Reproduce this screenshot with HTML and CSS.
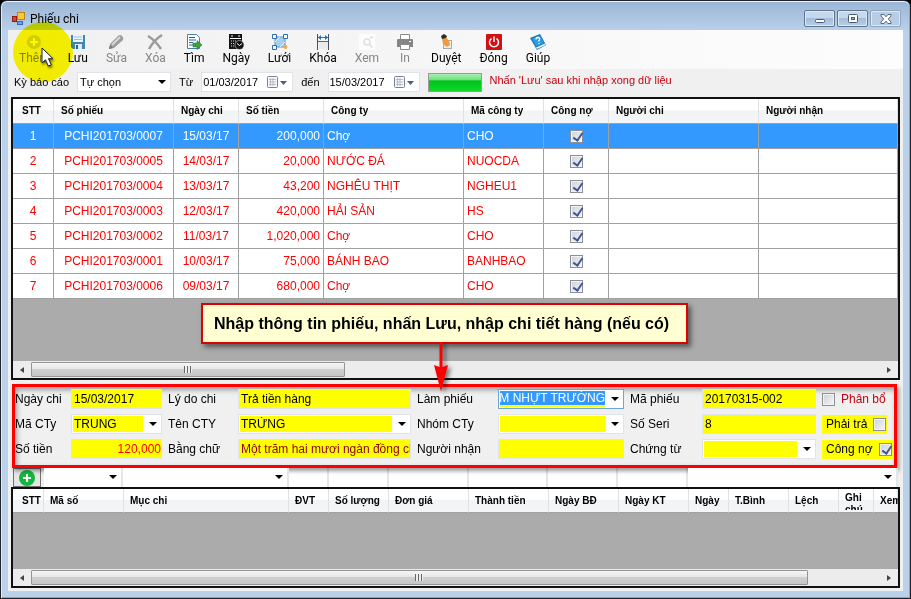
FILE: index.html
```html
<!DOCTYPE html>
<html lang="vi">
    <head>
        <meta charset="UTF-8">
        <title>Phiếu chi</title>
        <link rel="stylesheet" href="styles.css">
    </head>
    <body>
        <div class="window">
            <header class="titlebar">
                <svg class="app-icon" width="14" height="14" viewBox="0 0 14 14">
                    <rect x="0.5" y="4.5" width="4" height="5" fill="#d8442c" stroke="#8e1c10"/>
                    <rect x="5.5" y="0.5" width="7" height="7" fill="#fbc63c" stroke="#b9871a"/>
                    <rect x="5.5" y="9.5" width="5" height="3" fill="#6ba3ee" stroke="#3568b8"/>
                </svg>
                <h1 class="title">Phiếu chi</h1>
                <div class="window-buttons">
                    <button class="win-btn" aria-label="Minimize">
                        <svg width="12" height="10" viewBox="0 0 12 10"><rect x="1.5" y="5.5" width="9" height="3" rx="1" fill="#fff" stroke="#4b5a72"/></svg>
                    </button>
                    <button class="win-btn" aria-label="Maximize">
                        <svg width="12" height="10" viewBox="0 0 12 10"><rect x="1.5" y="0.5" width="9" height="8" rx="1" fill="#fff" stroke="#4b5a72"/><rect x="4.5" y="3.5" width="3" height="2" fill="#9db6d3" stroke="#4b5a72"/></svg>
                    </button>
                    <button class="win-btn win-close" aria-label="Close">
                        <svg width="12" height="10" viewBox="0 0 12 10"><path d="M1 .5h3l2 2.3 2-2.3h3v1.500L8.300 5 11 8v1.500H8L6 7.200 4 9.500H1V8l2.700-3L1 2z" fill="#fff" stroke="#5c6675"/></svg>
                    </button>
                </div>
            </header>

            <main class="client">
                <nav class="toolbar">
                    <button class="tool disabled">
                        <svg width="16" height="16" viewBox="0 0 16 16"><circle cx="8" cy="8" r="7" fill="#d2d2d2"/><path d="M8 4v8M4 8h8" stroke="#fff" stroke-width="2"/></svg>
                        Thêm
                    </button>
                    <button class="tool">
                        <svg width="16" height="16" viewBox="0 0 16 16"><path d="M1 1h14v14H3l-2-2z" fill="#3f86b4"/><path d="M3 1h10v7H3z" fill="#e9f6fb"/><path d="M4 3h8M4 5.500h8" stroke="#8fc3da"/><path d="M5 10h7v5H5z" fill="#d8edf5"/><path d="M6 11h2v4H6z" fill="#2b668f"/></svg>
                        Lưu
                    </button>
                    <button class="tool disabled">
                        <svg width="16" height="16" viewBox="0 0 16 16"><path d="M1 15l1-5 8-8q2-2 4 0t1 4l-9 8z" fill="#9c9c9c"/><path d="M4 11l8-8" stroke="#d9d9d9" stroke-width="2"/><path d="M1 15l1-4 3 3z" fill="#777"/></svg>
                        Sửa
                    </button>
                    <button class="tool disabled">
                        <svg width="16" height="16" viewBox="0 0 16 16"><path d="M1 2q7 4 13 13M15 1Q7 6 2 15" fill="none" stroke="#9b9b9b" stroke-width="2.500"/></svg>
                        Xóa
                    </button>
                    <button class="tool">
                        <svg width="16" height="16" viewBox="0 0 16 16"><path d="M1.500 .5h9l3 3v11h-12z" fill="#fff" stroke="#4a7fa8"/><path d="M3 3.500h6M3 6h7M3 8.500h4M3 11h4" stroke="#246aa1"/><path d="M7 9h4V6.500l5 4.500-5 4.500V13H7z" fill="#3fa142" stroke="#216b25" stroke-width=".5"/></svg>
                        Tìm
                    </button>
                    <button class="tool">
                        <svg width="16" height="16" viewBox="0 0 16 16"><path d="M1 0h13v15H1z" fill="#151515"/><path d="M4 1v2M11 1v2" stroke="#fff"/><path d="M2 4.500h11" stroke="#fff"/><path d="M3 7h5M3 9.500h4M3 12h4" stroke="#ddd" stroke-dasharray="1 1"/><circle cx="11.500" cy="11" r="4.500" fill="#111" stroke="#fff" stroke-width=".5"/><path d="M9 9.500l2.500 2 2.500-2" fill="none" stroke="#fff"/></svg>
                        Ngày
                    </button>
                    <button class="tool">
                        <svg width="16" height="16" viewBox="0 0 16 16"><path d="M3 3h10v10H3z" fill="#a5cff2" stroke="#5b95c9"/><path d="M3 8l5-5M8 13l5-5" stroke="#e4f2fc"/><path d="M.5.500h4v4h-4zM11.500.500h4v4h-4zM.5 11.500h4v4h-4z" fill="#f3faff" stroke="#2d6da8"/><circle cx="13.500" cy="13" r="2" fill="#f2a94e"/></svg>
                        Lưới
                    </button>
                    <button class="tool">
                        <svg width="16" height="16" viewBox="0 0 16 16"><path d="M2.500 0v16M13.500 0v16" stroke="#46505e"/><path d="M3 3.500h10" stroke="#2874ad"/><path d="M3 3.500L6 1v5zM13 3.500L10 1v5z" fill="#2874ad"/><path d="M3 7.500h10" stroke="#606975"/><path d="M4 8h9v7H4z" fill="#e8eaec"/></svg>
                        Khóa
                    </button>
                    <button class="tool disabled">
                        <svg width="16" height="16" viewBox="0 0 16 16"><rect width="16" height="16" fill="#fcfcfc"/><circle cx="8" cy="8" r="3" fill="none" stroke="#e0e0e0" stroke-width="1.500"/><path d="M10.500 10.500l3 3M11 4l3-1" stroke="#e4e4e4" stroke-width="2"/></svg>
                        Xem
                    </button>
                    <button class="tool disabled">
                        <svg width="16" height="16" viewBox="0 0 16 16"><path d="M3.500 .5h9v5h-9z" fill="#fff" stroke="#8a8a8a"/><path d="M0 6q0-1 1-1h14q1 0 1 1v7H0z" fill="#858585"/><path d="M3.500 10.500h9v5h-9z" fill="#fff" stroke="#8a8a8a"/><path d="M12 7.500h2" stroke="#fff"/></svg>
                        In
                    </button>
                    <button class="tool">
                        <svg width="16" height="16" viewBox="0 0 16 16"><rect x="5.500" y="6.500" width="8" height="8" fill="#eee" stroke="#aaa"/><path d="M4 4l4-1 3 4 1 4-3 2-4-3z" fill="#f29a3e"/><path d="M3 2l3-2 3 2-1 2-4 1z" fill="#2b2b2b"/></svg>
                        Duyệt
                    </button>
                    <button class="tool">
                        <svg width="16" height="16" viewBox="0 0 16 16"><rect width="16" height="16" rx="1" fill="#d30f13"/><path d="M5.500 4.500a4.500 4.500 0 1 0 5 0" fill="none" stroke="#fff" stroke-width="1.500"/><path d="M8 2.500v5.500" stroke="#fff" stroke-width="1.500"/></svg>
                        Đóng
                    </button>
                    <button class="tool">
                        <svg width="16" height="16" viewBox="0 0 16 16"><path d="M0 4L10 0l6 11-9 5z" fill="#1b74b8"/><path d="M6 13.500l9-4 .5 1.500-8.500 4z" fill="#e8f3fa"/><path d="M2 4.500L9.500 1.500l4.500 7.500-8 3.500z" fill="#2f9be0"/><path d="M6 5.500q0-2 2-2t1.500 2L8.500 7.500M9 9v1" fill="none" stroke="#fff" stroke-width="1.300"/></svg>
                        Giúp
                    </button>
                </nav>

                <div class="filter">
                    <label for="period">Kỳ báo cáo</label>
                    <span class="combo period">
                        <select id="period"><option>Tự chọn</option></select>
                    </span>
                    <label for="from">Từ</label>
                    <span class="date">
                        <input id="from" type="text" value="01/03/2017">
                        <svg width="20" height="13" viewBox="0 0 20 13"><rect x=".5" y=".5" width="10" height="11" rx="1" fill="#f5f7fa" stroke="#7b8390"/><path d="M2 3.500h7M2 6h7M2 8.500h7M3.500 2v8M6 2v8" stroke="#a2aab8" stroke-width=".7"/><path d="M13 5h7l-3.500 4z" fill="#4a5f8c"/></svg>
                    </span>
                    <label for="to">đến</label>
                    <span class="date">
                        <input id="to" type="text" value="15/03/2017">
                        <svg width="20" height="13" viewBox="0 0 20 13"><rect x=".5" y=".5" width="10" height="11" rx="1" fill="#f5f7fa" stroke="#7b8390"/><path d="M2 3.500h7M2 6h7M2 8.500h7M3.500 2v8M6 2v8" stroke="#a2aab8" stroke-width=".7"/><path d="M13 5h7l-3.500 4z" fill="#4a5f8c"/></svg>
                    </span>
                    <progress class="progress" value="100" max="100" aria-label="Tiến độ"></progress>
                    <span class="hint">Nhấn 'Lưu' sau khi nhập xong dữ liệu</span>
                </div>

                <section class="grid vouchers">
                    <table>
                        <colgroup>
                            <col class="w41"><col class="w120"><col class="w65"><col class="w85"><col class="w140"><col class="w80"><col class="w65"><col class="w150"><col>
                        </colgroup>
                        <thead>
                            <tr><th class="stt">STT</th><th>Số phiếu</th><th>Ngày chi</th><th>Số tiền</th><th>Công ty</th><th>Mã công ty</th><th>Công nợ</th><th>Người chi</th><th>Người nhận</th></tr>
                        </thead>
                        <tbody id="rows"></tbody>
                    </table>
                    <div class="scrollbar">
                        <button class="scroll-arrow left" aria-label="Cuộn trái"></button>
                        <div class="track"><div class="thumb short"><i></i></div></div>
                        <button class="scroll-arrow right" aria-label="Cuộn phải"></button>
                    </div>
                </section>

                <form class="detail">
                    <label for="ngaychi">Ngày chi</label>
                    <input class="field" id="ngaychi" type="text" value="15/03/2017">
                    <label for="lydo">Lý do chi</label>
                    <input class="field" id="lydo" type="text" value="Trả tiền hàng">
                    <label for="lamphieu">Làm phiếu</label>
                    <span class="combo yellow focused"><input id="lamphieu" type="text" dir="rtl" value="LÂM NHỰT TRƯỜNG"></span>
                    <label for="maphieu">Mã phiếu</label>
                    <input class="field" id="maphieu" type="text" value="20170315-002">
                    <label class="check red"><input type="checkbox">Phân bổ</label>

                    <label for="macty">Mã CTy</label>
                    <span class="combo yellow"><input id="macty" type="text" value="TRUNG"></span>
                    <label for="tencty">Tên CTY</label>
                    <span class="combo yellow"><input id="tencty" type="text" value="TRỨNG"></span>
                    <label for="nhomcty">Nhóm CTy</label>
                    <span class="combo yellow"><input id="nhomcty" type="text"></span>
                    <label for="seri">Số Seri</label>
                    <input class="field" id="seri" type="text" value="8">
                    <label class="check marked">Phải trả<input type="checkbox"></label>

                    <label for="sotien">Số tiền</label>
                    <input class="field amount" id="sotien" type="text" value="120,000">
                    <label for="bangchu">Bằng chữ</label>
                    <input class="field words" id="bangchu" type="text" value="Một trăm hai mươi ngàn đồng chẵn">
                    <label for="nguoinhan">Người nhận</label>
                    <input class="field" id="nguoinhan" type="text">
                    <label for="chungtu">Chứng từ</label>
                    <span class="combo yellow"><input id="chungtu" type="text"></span>
                    <label class="check marked">Công nợ<input type="checkbox" checked></label>
                </form>

                <div class="entry">
                    <button class="add" aria-label="Thêm dòng">
                        <svg width="16" height="16" viewBox="0 0 16 16"><circle cx="8" cy="8" r="8" fill="#12b83c"/><path d="M8 4v8M4 8h8" stroke="#fff" stroke-width="2"/></svg>
                    </button>
                    <span class="combo"><select aria-label="Mã số"></select></span>
                    <span class="combo"><select aria-label="Mục chi"></select></span>
                    <input type="text" aria-label="ĐVT">
                    <input type="text" aria-label="Số lượng">
                    <input type="text" aria-label="Đơn giá">
                    <input type="text" aria-label="Thành tiền">
                    <input type="text" aria-label="Ngày BĐ">
                    <input type="text" aria-label="Ngày KT">
                    <span class="combo"><select aria-label="Ghi chú"></select></span>
                </div>

                <section class="grid items">
                    <table>
                        <colgroup>
                            <col class="w31"><col class="w80"><col class="w165"><col class="w40"><col class="w60"><col class="w80"><col class="w80"><col class="w70"><col class="w70"><col class="w40"><col class="w60"><col class="w50"><col class="w35"><col>
                        </colgroup>
                        <thead>
                            <tr><th class="stt">STT</th><th>Mã số</th><th>Mục chi</th><th>ĐVT</th><th>Số lượng</th><th>Đơn giá</th><th>Thành tiền</th><th>Ngày BĐ</th><th>Ngày KT</th><th>Ngày</th><th>T.Bình</th><th>Lệch</th><th><div class="wrap">Ghi chú</div></th><th>Xem</th></tr>
                        </thead>
                    </table>
                    <div class="scrollbar">
                        <button class="scroll-arrow left" aria-label="Cuộn trái"></button>
                        <div class="track"><div class="thumb long"><i></i></div></div>
                        <button class="scroll-arrow right" aria-label="Cuộn phải"></button>
                    </div>
                </section>
            </main>

            <div class="spot"></div>
            <svg class="pointer" width="14" height="21" viewBox="0 0 14 21"><path d="M1 1v15l3.500-3.200 2.800 6.200 3-1.300-2.800-6H12z" fill="#fff" stroke="#222"/></svg>

            <div class="callout">
                Nhập thông tin phiếu, nhấn Lưu, nhập chi tiết hàng (nếu có)
                <svg class="arrow" width="16" height="50" viewBox="0 0 16 50"><path d="M6.500 0h3v25l5.500-2L8 49.500 1 23l5.500 2z" fill="#f00"/></svg>
            </div>
        </div>

        <script>
        const vouchers = [
            ["PCHI201703/0007", "15/03/17", "200,000", "Chợ", "CHO"],
            ["PCHI201703/0005", "14/03/17", "20,000", "NƯỚC ĐÁ", "NUOCDA"],
            ["PCHI201703/0004", "13/03/17", "43,200", "NGHÊU THỊT", "NGHEU1"],
            ["PCHI201703/0003", "12/03/17", "420,000", "HẢI SẢN", "HS"],
            ["PCHI201703/0002", "11/03/17", "1,020,000", "Chợ", "CHO"],
            ["PCHI201703/0001", "10/03/17", "75,000", "BÁNH BAO", "BANHBAO"],
            ["PCHI201703/0006", "09/03/17", "680,000", "Chợ", "CHO"]
        ];

        document.getElementById('rows').innerHTML = vouchers.map((v, i) => `
            <tr class="${i === 0 ? 'selected' : ''}">
                <td class="center">${i + 1}</td>
                <td class="center">${v[0]}</td>
                <td class="center">${v[1]}</td>
                <td class="right">${v[2]}</td>
                <td>${v[3]}</td>
                <td>${v[4]}</td>
                <td class="center"><input type="checkbox" checked aria-label="Công nợ ${v[0]}"></td>
                <td></td>
                <td></td>
            </tr>`).join('');
        </script>
    </body>
</html>
```

FILE: styles.css
```css
* {
    box-sizing: border-box;
}

body {
    margin: 0;
    background: #000;
    font-family: "Liberation Sans", Arial, sans-serif;
    font-size: 12px;
    color: #000;
}

button, input, select {
    font: inherit;
    color: inherit;
    margin: 0;
    padding: 0;
    border: none;
    border-radius: 0;
    background: none;
    min-width: 0;
    outline: none;
}

.window {
    position: relative;
    display: flex;
    flex-direction: column;
    min-height: 100vh;
    padding: 0 7px 7px;
    border: 1px solid #20242c;
    border-radius: 7px 7px 0 0;
    background: linear-gradient(#9ab5d5, #bad1ea 30px);
    box-shadow: inset 0 1px #eef4fb, inset 1px 0 #dfeaf6, inset -1px -1px #3cc4e0;
}

/* title bar */
.titlebar {
    display: flex;
    align-items: center;
    height: 29px;
    padding: 6px 0 0 4px;
}

.title {
    margin: 0 0 0 4px;
    font: 12px Roboto, "Noto Sans", sans-serif;
}

.window-buttons {
    display: flex;
    gap: 2px;
    margin-left: auto;
    padding-right: 2px;
}

.win-btn {
    display: flex;
    align-items: center;
    justify-content: center;
    width: 31px;
    height: 17px;
    border: 1px solid #5f7590;
    border-radius: 2px;
    background: linear-gradient(#c6d8ec 50%, #a3bcd9 50%, #bad0e8);
    box-shadow: inset 0 0 0 1px #dbe8f5;
}

.win-close {
    border-color: #8ea5c0;
    background: #b7cde6;
}

/* client area */
.client {
    display: flex;
    flex: 1;
    flex-direction: column;
    background: #f0f0f0;
    padding-bottom: 3px;
}

.toolbar {
    display: flex;
    gap: 18px;
    height: 39px;
    padding: 4px 11px 0;
    background: linear-gradient(90deg, #f0f0f0, #fdfdfd);
}

.tool {
    display: flex;
    flex-direction: column;
    align-items: center;
    font: 12px/16px Roboto, "Noto Sans", sans-serif;
}

.disabled {
    color: #868686;
}

.filter {
    display: flex;
    align-items: center;
    height: 28px;
    padding: 0 6px 2px;
    gap: 8px;
    font-size: 11px;
}

.combo {
    position: relative;
    display: flex;
    height: 20px;
    padding-right: 18px;
    border: 1px solid #dfe3ea;
    background: #fff;
}

.combo::after {
    content: "";
    position: absolute;
    right: 4px;
    top: 7px;
    border: 4px solid transparent;
    border-top-color: #000;
    border-bottom: none;
}

.combo select {
    width: 100%;
    appearance: none;
    padding-left: 2px;
}

.combo input {
    width: 100%;
}

.period {
    width: 94px;
}

.date {
    display: flex;
    align-items: center;
    width: 92px;
    height: 20px;
    padding: 0 5px 0 1px;
    border: 1px solid #dfe3ea;
    background: #fff;
}

.date input {
    flex: 1;
}

.progress {
    appearance: none;
    width: 54px;
    height: 19px;
    border: 1px solid #9a9a9a;
}

.progress::-webkit-progress-bar {
    background: #e6e6e6;
}

.progress::-webkit-progress-value {
    background: linear-gradient(#a8eeb0, #6fe07c 35%, #00c41c 40%, #10d82c);
}

.hint {
    padding-bottom: 5px;
    color: #c80010;
}

/* data grids */
.grid {
    display: flex;
    flex-direction: column;
    margin: 0 3px;
    border: 2px solid #111;
    background: #ababab;
    overflow: hidden;
}

.vouchers {
    flex: 1;
}

.items {
    height: 101px;
}

.grid table {
    width: 100%;
    table-layout: fixed;
    border-collapse: separate;
    border-spacing: 0;
}

.grid th {
    height: 24px;
    padding: 0 0 0 6px;
    border-right: 1px solid #dfe1e4;
    border-bottom: 1px solid #a0a0a0;
    background: linear-gradient(#fff 45%, #f2f3f5 50%, #f4f5f7);
    font-size: 10px;
    line-height: 12px;
    text-align: left;
    white-space: nowrap;
}

.vouchers th {
    height: 25px;
    padding-left: 7px;
}

.grid th.stt {
    padding-left: 9px;
}

.grid .wrap {
    height: 18px;
    white-space: normal;
    overflow: hidden;
}

.grid td {
    height: 25px;
    padding: 0 3px;
    border-right: 1px solid #a0a0a0;
    border-bottom: 1px solid #a0a0a0;
    background: #fff;
    color: #f00;
    white-space: nowrap;
}

.grid .selected td {
    background: #3399ff;
    color: #fff;
}

.grid .center {
    text-align: center;
}

.grid .right {
    text-align: right;
}

.w31 { width: 31px; }
.w35 { width: 35px; }
.w40 { width: 40px; }
.w41 { width: 41px; }
.w50 { width: 50px; }
.w60 { width: 60px; }
.w65 { width: 65px; }
.w70 { width: 70px; }
.w80 { width: 80px; }
.w85 { width: 85px; }
.w120 { width: 120px; }
.w140 { width: 140px; }
.w150 { width: 150px; }
.w165 { width: 165px; }

input[type="checkbox"] {
    appearance: none;
    position: relative;
    width: 13px;
    height: 13px;
    border: 1px solid #8a8f98;
    background: linear-gradient(135deg, #cdd1d8, #f6f6f6);
    box-shadow: inset 0 0 0 1px #f4f4f4;
    vertical-align: middle;
}

.grid input[type="checkbox"] {
    vertical-align: text-bottom;
}

input[type="checkbox"]:checked::after {
    content: "";
    position: absolute;
    left: 4px;
    top: 0;
    width: 4px;
    height: 8px;
    border: solid #3f5797;
    border-width: 0 2px 2px 0;
    transform: rotate(35deg);
}

.scrollbar {
    display: flex;
    height: 17px;
    margin-top: auto;
    background: #ececec;
}

.scroll-arrow {
    display: flex;
    align-items: center;
    justify-content: center;
    width: 18px;
}

.scroll-arrow::after {
    content: "";
    border: 3px solid transparent;
}

.left::after {
    border-left: none;
    border-right: 4px solid #444;
}

.right::after {
    border-right: none;
    border-left: 4px solid #444;
}

.track {
    flex: 1;
    padding: 1px 0;
}

.thumb {
    display: flex;
    align-items: center;
    justify-content: center;
    height: 15px;
    border: 1px solid #959595;
    border-radius: 1px;
    background: linear-gradient(#f6f6f6, #e6e6e6 45%, #d0d0d0 50%, #c6c6c8);
}

.short {
    width: 37%;
}

.long {
    width: 91.5%;
}

.thumb i {
    width: 8px;
    height: 7px;
    background: repeating-linear-gradient(90deg, #666 0 1px, #eee 1px 3px);
}

/* voucher form */
.detail {
    display: grid;
    grid-template-columns: 56px 91fr 76px 173fr 87px 126fr 78px 114fr 78px;
    grid-auto-rows: 20px;
    align-items: center;
    gap: 5px 0;
    margin: 4px 6px 0 4px;
    padding: 2px 0 6px;
    border: 3px solid #f00;
    box-shadow: 2px 3px 4px rgba(0,0,0,0.4), inset 2px 3px 5px rgba(0,0,0,0.35);
    position: relative;
}

.detail > label {
    padding-left: 6px;
}

.detail > label:nth-child(18n+1), #sotien {
    padding-left: 0;
}

.detail > label[for="ngaychi"], .detail > label[for="macty"], .detail > label[for="sotien"] {
    padding-left: 0;
}

.field {
    width: 100%;
    height: 20px;
    padding-left: 2px;
    border: 1px solid #dfe3ea;
    background: #ff0;
}

.amount {
    text-align: right;
    color: #f00;
}

.words {
    color: #900000;
}

.yellow input {
    margin: 1px 0 1px 1px;
    padding-left: 1px;
    background: #ff0;
}

.focused {
    border-color: #6ea6dc;
}

.focused input {
    padding: 0;
    border-bottom: 2px solid #ff0;
    background: #3399ff;
    color: #fff;
}

.detail > .check {
    display: flex;
    align-items: center;
    justify-self: start;
    gap: 6px;
    height: 19px;
    margin-left: 6px;
    padding: 0 1px 0 0;
}

.detail > .marked {
    padding-left: 4px;
    background: #ff0;
}

.red {
    color: #c80010;
}

/* new line entry */
.entry {
    display: grid;
    grid-template-columns: 31px 79fr 166fr 40fr 60fr 80fr 80fr 70fr 70fr 210fr;
    height: 19px;
    margin: 0 5px;
}

.entry > .combo, .entry > input {
    height: 19px;
    border: none;
    border-right: 2px solid #e3e6eb;
    background: #fff;
}

.add {
    display: flex;
    align-items: center;
    justify-content: center;
    width: 28px;
    border: 1px solid #707070;
    background: #e6e6e6;
}

/* highlight and note over the window */
.spot {
    position: absolute;
    left: 12px;
    top: 21px;
    width: 60px;
    height: 60px;
    border-radius: 50%;
    background: #fffa00;
    mix-blend-mode: multiply;
}

.pointer {
    position: absolute;
    left: 40px;
    top: 46px;
    filter: drop-shadow(1px 2px 1px rgba(0,0,0,0.5));
}

.callout {
    position: absolute;
    left: 200px;
    top: 302px;
    padding: 0 17px 0 11px;
    border: 2px solid #e00000;
    background: #ffffd2;
    box-shadow: 3px 3px 5px rgba(0,0,0,0.5);
    font-size: 16px;
    font-weight: bold;
    line-height: 37px;
    white-space: nowrap;
}

.arrow {
    position: absolute;
    left: 230px;
    top: 100%;
    filter: drop-shadow(3px 2px 2px rgba(0,0,0,0.5));
}
```
